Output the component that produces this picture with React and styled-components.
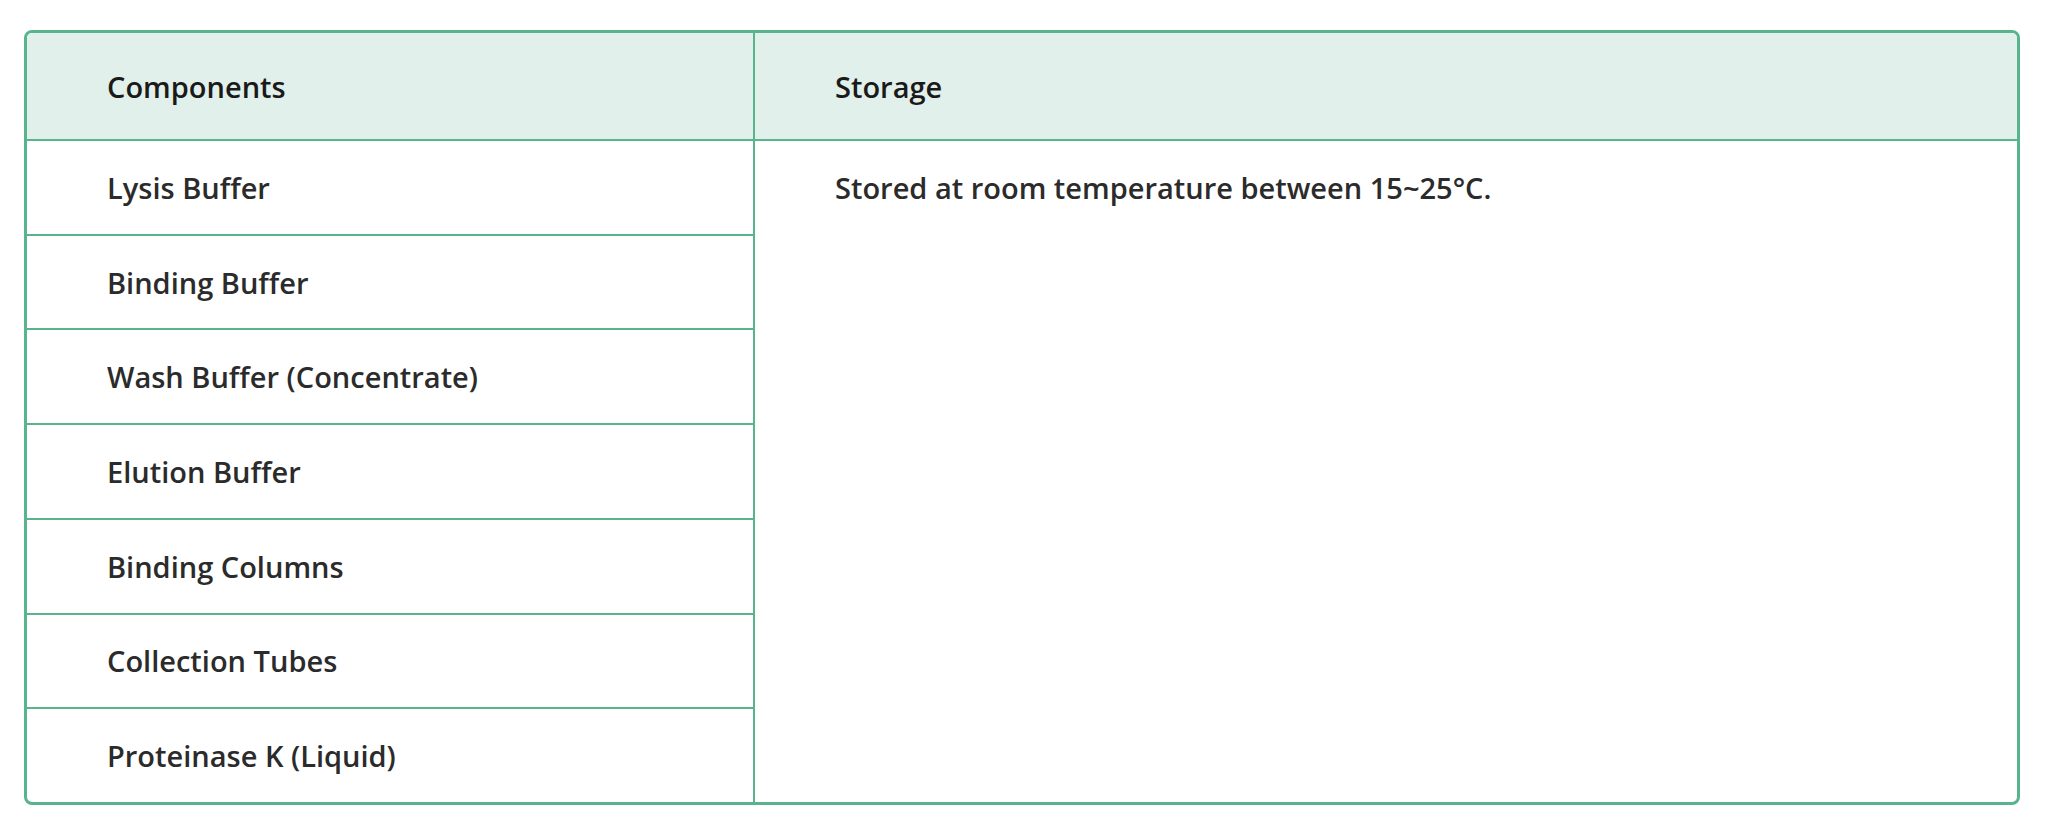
import React from 'react';
import styled, { createGlobalStyle } from 'styled-components';

const GlobalStyle = createGlobalStyle`
    html, body {
        margin: 0;
        padding: 0;
        background: #ffffff;
    }
    body {
        font-family: "Open Sans", Lato, "Liberation Sans", sans-serif;
    }
`;

const green = '#57b48c';

const Page = styled.div`
    padding: 30px 27px 26px 24px;
`;

const Table = styled.div`
    border: 3px solid ${green};
    border-radius: 8px;
    overflow: hidden;
    display: grid;
    grid-template-columns: 726px 1fr;
`;

const HeadCell = styled.div`
    display: flex;
    align-items: center;
    height: 106px;
    padding: 0 80px;
    background: #e1f0ea;
    border-bottom: 2px solid ${green};
    border-left: ${props => props.divided ? `2px solid ${green}` : 'none'};
    font-size: 29px;
    font-weight: 600;
    color: #1a1a1a;
`;

const ItemList = styled.div`
    display: flex;
    flex-direction: column;
    height: 661px;
`;

const ItemRow = styled.div`
    flex: 1;
    display: flex;
    align-items: center;
    padding: 0 80px;
    border-top: ${props => props.first ? 'none' : `2px solid ${green}`};
    font-size: 29px;
    font-weight: 600;
    color: #2b2b2b;
`;

const StorageCell = styled.div`
    border-left: 2px solid ${green};
    padding: 28px 80px 0;
    font-size: 29px;
    font-weight: 600;
    color: #2b2b2b;
    line-height: 1.3;
`;

const components = [
    'Lysis Buffer',
    'Binding Buffer',
    'Wash Buffer (Concentrate)',
    'Elution Buffer',
    'Binding Columns',
    'Collection Tubes',
    'Proteinase K (Liquid)',
];

export default function App() {
    return (
        <Page>
            <GlobalStyle />
            <Table>
                <HeadCell>Components</HeadCell>
                <HeadCell divided>Storage</HeadCell>
                <ItemList>
                    {components.map((name, i) => (
                        <ItemRow key={name} first={i === 0}>{name}</ItemRow>
                    ))}
                </ItemList>
                <StorageCell>Stored at room temperature between 15~25°C.</StorageCell>
            </Table>
        </Page>
    );
}
